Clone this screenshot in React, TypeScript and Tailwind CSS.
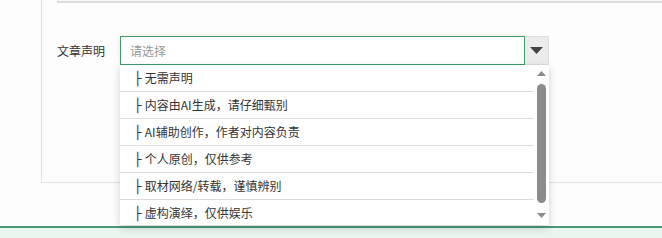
import React from 'react';

const options = [
  '无需声明',
  '内容由AI生成，请仔细甄别',
  'AI辅助创作，作者对内容负责',
  '个人原创，仅供参考',
  '取材网络/转载，谨慎辨别',
  '虚构演绎，仅供娱乐',
];

const font = "font-['Microsoft_YaHei','Noto_Sans_CJK_SC',sans-serif]";

export default function App() {
  return (
    <div className={`relative w-[662px] h-[238px] overflow-hidden bg-[#fdfdfd] text-[12px] text-[#333] ${font}`}>
      <div className="pl-[41px]">
        <div className="h-[183px] border-l border-b border-[#e2e2e2]">
          <div className="ml-[15px] h-[3px] border-l border-b-2 border-[#dcdcdc] bg-[#f7f7f7]" />
          <div className="flex items-start pl-[15px] pt-[33px]">
            <div className="w-[63px] leading-[29px] text-[#333]">文章声明</div>
            <div className="relative">
              <div className="flex">
                <div className="w-[405px] h-[29px] border border-[#3f9a6c] bg-white pl-[9px] leading-[27px] text-[#999] shadow-[0_0_4px_rgba(235,170,100,0.35)]">
                  请选择
                </div>
                <div className="w-[24px] h-[29px] border border-l-0 border-[#dddddd] bg-[#ececec] flex items-center justify-center">
                  <svg width="13" height="7" viewBox="0 0 13 7">
                    <path d="M0 0 H13 L6.5 7 Z" fill="#444" />
                  </svg>
                </div>
              </div>
              {/* field behind the open list */}
              <div className="mt-[3px] w-[300px] h-[33px] border-l border-[#3f9a6c]" />

              <div className="absolute left-0 top-[29px] w-[429px] h-[160px] bg-white flex shadow-[0_3px_8px_rgba(0,0,0,0.18)]">
                <div className="w-[414px] overflow-hidden">
                  {options.map((o) => (
                    <div key={o} className="h-[27px] border-b border-[#dcdcdc] flex items-center leading-none">
                      <span className="w-[14px] shrink-0" />
                      <span className="text-[#3a3a3a] mr-[3px] font-['DejaVu_Sans',sans-serif] text-[13px]">├</span>
                      <span>{o}</span>
                    </div>
                  ))}
                </div>
                <div className="w-[15px] flex flex-col items-center bg-white">
                  <svg className="mt-[6px]" width="9" height="5" viewBox="0 0 9 5">
                    <path d="M0 5 L4.5 0 L9 5 Z" fill="#8a8a8a" />
                  </svg>
                  <div className="mt-[8px] w-[9px] h-[119px] rounded-[5px] bg-[#8c8c8c]" />
                  <svg className="mt-[10px]" width="9" height="5" viewBox="0 0 9 5">
                    <path d="M0 0 H9 L4.5 5 Z" fill="#8a8a8a" />
                  </svg>
                </div>
              </div>
            </div>
          </div>
        </div>
      </div>
      <div className="mt-[43px] h-[2px] bg-[#4a9a76]" />
      <div className="h-[10px] bg-[#ebf5f0]" />
    </div>
  );
}
